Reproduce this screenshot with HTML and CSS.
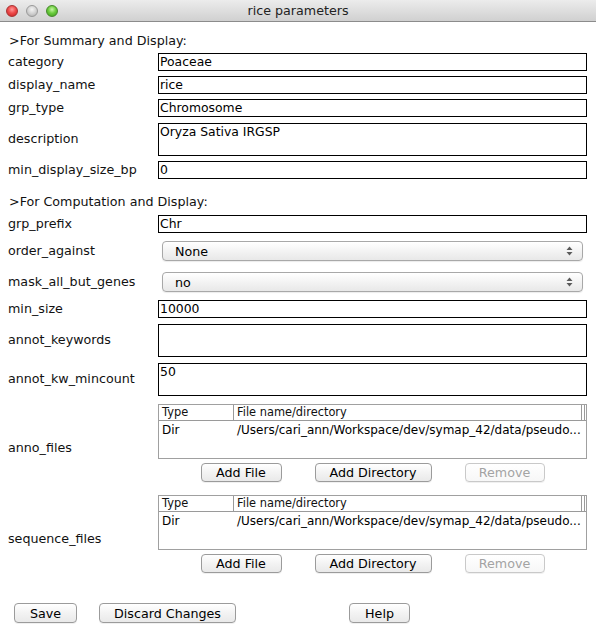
FILE: index.html
```html
<!DOCTYPE html>
<html>
<head>
<meta charset="utf-8">
<title>rice parameters</title>
<link rel="stylesheet" href="styles.css">
</head>
<body>
<div class="window">
  <div class="titlebar">
    <div class="lights">
      <span class="light red"></span>
      <span class="light gray"></span>
      <span class="light green"></span>
    </div>
    <div class="title">rice parameters</div>
  </div>
  <div class="content">
    <div class="section">&gt;For Summary and Display:</div>
    <div class="form">
      <div class="label">category</div><div class="field">Poaceae</div>
      <div class="label">display_name</div><div class="field">rice</div>
      <div class="label">grp_type</div><div class="field">Chromosome</div>
      <div class="label">description</div><div class="field area">Oryza Sativa IRGSP</div>
      <div class="label">min_display_size_bp</div><div class="field">0</div>
    </div>
    <div class="section second">&gt;For Computation and Display:</div>
    <div class="form">
      <div class="label">grp_prefix</div><div class="field">Chr</div>
      <div class="label">order_against</div>
      <div class="selrow"><div class="select"><span>None</span><svg class="arrows" width="7" height="10" viewBox="0 0 7 10"><path d="M3.5 0.5 L6.5 4 L0.5 4 Z M0.5 6 L6.5 6 L3.5 9.5 Z" fill="#5a5a5a"/></svg></div></div>
      <div class="label">mask_all_but_genes</div>
      <div class="selrow"><div class="select"><span>no</span><svg class="arrows" width="7" height="10" viewBox="0 0 7 10"><path d="M3.5 0.5 L6.5 4 L0.5 4 Z M0.5 6 L6.5 6 L3.5 9.5 Z" fill="#5a5a5a"/></svg></div></div>
      <div class="label">min_size</div><div class="field">10000</div>
      <div class="label">annot_keywords</div><div class="field area">&nbsp;</div>
      <div class="label">annot_kw_mincount</div><div class="field area">50</div>
      <div class="label filelabel">anno_files</div>
      <div class="filebox">
        <div class="table">
          <div class="thead"><span class="c1">Type</span><span class="c2">File name/directory</span><span class="c3"></span></div>
          <div class="trow"><span class="c1">Dir</span><span class="c2">/Users/cari_ann/Workspace/dev/symap_42/data/pseudo...</span></div>
        </div>
        <div class="btnrow">
          <button class="btn w-file">Add File</button>
          <button class="btn w-dir">Add Directory</button>
          <button class="btn w-rem" disabled>Remove</button>
        </div>
      </div>
      <div class="label filelabel">sequence_files</div>
      <div class="filebox">
        <div class="table">
          <div class="thead"><span class="c1">Type</span><span class="c2">File name/directory</span><span class="c3"></span></div>
          <div class="trow"><span class="c1">Dir</span><span class="c2">/Users/cari_ann/Workspace/dev/symap_42/data/pseudo...</span></div>
        </div>
        <div class="btnrow">
          <button class="btn w-file">Add File</button>
          <button class="btn w-dir">Add Directory</button>
          <button class="btn w-rem" disabled>Remove</button>
        </div>
      </div>
    </div>
    <div class="bottom">
      <button class="btn w-save">Save</button>
      <button class="btn w-discard">Discard Changes</button>
      <button class="btn w-help">Help</button>
    </div>
  </div>
</div>
</body>
</html>
```

FILE: styles.css
```css
html, body {
  margin: 0;
  padding: 0;
  background: #ffffff;
}
body {
  width: 596px;
  height: 640px;
  overflow: hidden;
  font-family: "DejaVu Sans", "Liberation Sans", sans-serif;
  color: #000;
}
.window {
  width: 596px;
  height: 640px;
  background: #fff;
}
.titlebar {
  height: 21px;
  border-bottom: 1px solid #8c8c8c;
  background: linear-gradient(#ececec, #d0d0d0);
  display: flex;
  align-items: center;
  position: relative;
}
.lights {
  display: flex;
  gap: 8px;
  padding-left: 6px;
}
.light {
  width: 12px;
  height: 12px;
  border-radius: 50%;
  box-sizing: border-box;
}
.light.red {
  background: radial-gradient(circle at 50% 35%, #ff9a9a 0%, #ee4b4b 45%, #c42020 100%);
  border: 1px solid #a83232;
}
.light.gray {
  background: radial-gradient(circle at 50% 35%, #f4f4f4 0%, #d2d2d2 50%, #a9a9a9 100%);
  border: 1px solid #9a9a9a;
}
.light.green {
  background: radial-gradient(circle at 50% 35%, #c8f5a8 0%, #6ccd3e 45%, #3c9a1c 100%);
  border: 1px solid #46882b;
}
.title {
  position: absolute;
  left: 0;
  right: 0;
  top: 0;
  line-height: 22px;
  text-align: center;
  font-size: 12.7px;
  color: #222;
  pointer-events: none;
}
.content {
  padding-left: 8px;
}
.section {
  font-size: 12.7px;
  line-height: 16px;
  margin-top: 11px;
  margin-bottom: 4px;
  padding-left: 1px;
  color: #111;
}
.section.second {
  margin-top: 15px;
  margin-bottom: 5px;
}
.form {
  display: grid;
  grid-template-columns: 150px 429px;
  row-gap: 5px;
  align-items: center;
}
.label {
  font-size: 12.7px;
  line-height: 16px;
  color: #111;
}
.label.filelabel {
  padding-top: 7px;
}
.field {
  border: 1px solid #000;
  height: 16px;
  line-height: 16px;
  font-size: 12.4px;
  padding: 0 1px;
  white-space: nowrap;
  overflow: hidden;
}
.field.area {
  height: 31px;
  margin-top: 1px;
}
.selrow {
  height: 26px;
  display: flex;
  align-items: center;
  padding: 0 4px;
}
.select {
  flex: 1;
  height: 18px;
  border: 1px solid #a8a8a8;
  border-radius: 4px;
  background: linear-gradient(#ffffff, #f1f1f1 60%, #e8e8e8);
  box-shadow: 0 1px 1px rgba(0,0,0,0.08);
  display: flex;
  align-items: center;
  justify-content: space-between;
  padding: 0 9px 0 12px;
  font-size: 12.7px;
}
.arrows {
  display: block;
}
.filebox {
  padding-top: 3px;
}
.table {
  border: 1px solid #a0a0a0;
  height: 53px;
  font-size: 11.4px;
}
.thead {
  display: flex;
  height: 15px;
  line-height: 15px;
  border-bottom: 1px solid #9a9a9a;
  color: #111;
}
.thead .c1 {
  border-right: 1px solid #9a9a9a;
  padding-left: 3px;
  box-sizing: border-box;
  width: 75px;
}
.thead .c2 {
  flex: 1;
  padding-left: 3px;
}
.thead .c3 {
  width: 2px;
  border-left: 1px solid #9a9a9a;
  border-right: 1px solid #9a9a9a;
  margin-right: 1px;
}
.trow {
  display: flex;
  height: 19px;
  line-height: 19px;
  white-space: nowrap;
  font-size: 12px;
}
.trow .c1 {
  width: 75px;
  padding-left: 3px;
  box-sizing: border-box;
}
.trow .c2 {
  flex: 1;
  padding-left: 3px;
  overflow: hidden;
}
.btnrow {
  display: flex;
  justify-content: center;
  gap: 33px;
  margin-top: 4px;
  margin-bottom: 5px;
}
.btn {
  height: 19px;
  box-sizing: border-box;
  border: 1px solid #9b9b9b;
  border-radius: 4px;
  background: linear-gradient(#ffffff, #f3f3f3 50%, #e9e9e9);
  box-shadow: 0 1px 0 rgba(0,0,0,0.06);
  font-family: "DejaVu Sans", "Liberation Sans", sans-serif;
  font-size: 12.7px;
  line-height: 17px;
  color: #000;
  padding: 0;
  margin: 0;
}
.btn:disabled {
  color: #a3a3a3;
  border-color: #c9c9c9;
  background: linear-gradient(#ffffff, #f7f7f7);
}
.w-file { width: 81px; }
.w-dir { width: 117px; }
.w-rem { width: 80px; }
.bottom {
  display: flex;
  align-items: center;
  margin-top: 25px;
  padding-left: 6px;
}
.w-save { width: 63px; height: 20px; }
.w-discard { width: 137px; height: 20px; margin-left: 22px; }
.w-help { width: 61px; height: 20px; margin-left: 113px; }
```
